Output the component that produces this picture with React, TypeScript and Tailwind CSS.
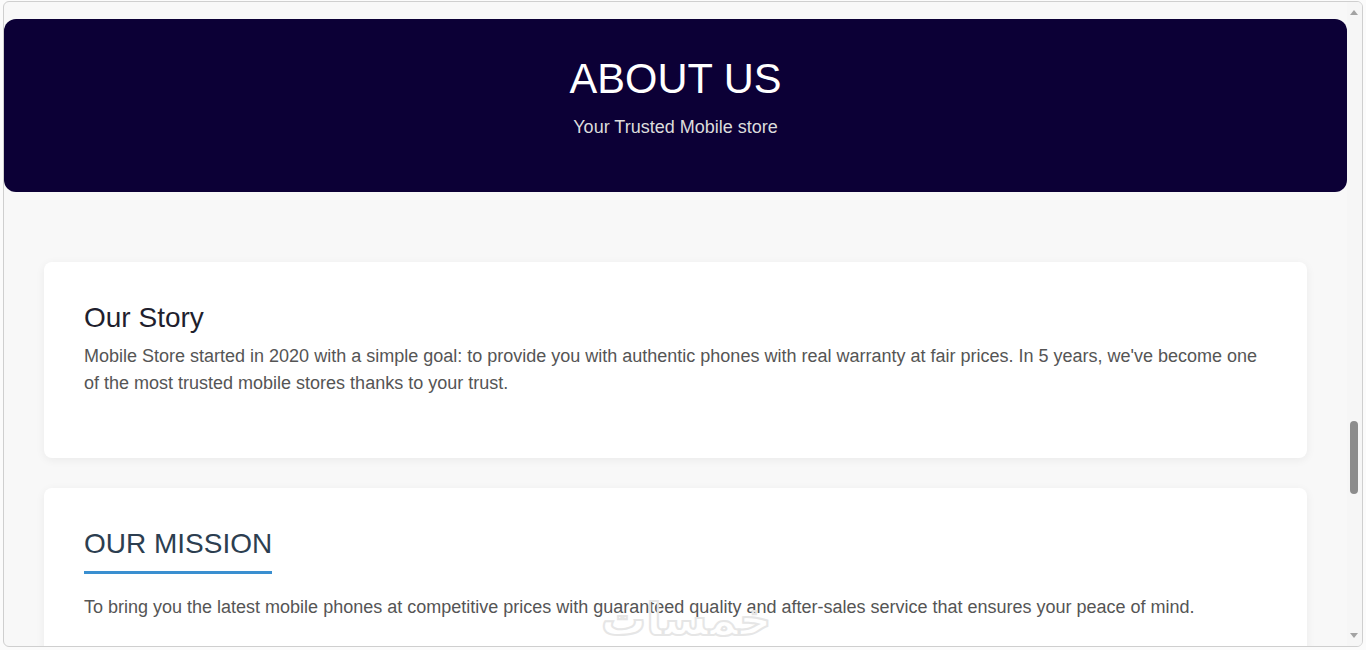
export default function App() {
  return (
    <div className="h-[650px] w-full bg-[#fbfbfb] pl-[3px] pt-[1px] overflow-hidden font-['Liberation_Sans',Arial,sans-serif]">
      {/* browser frame */}
      <div className="relative flex h-[646px] w-[1360px] overflow-hidden rounded-[6px] border border-[#cfcfcf] bg-[#f8f8f8]">
        {/* page content */}
        <div className="flex-1 pt-[17px]">
          <header className="rounded-[12px] bg-[#0c0036] pt-[36px] pb-[54px] text-center">
            <h1 className="mb-[14px] text-[41.6px] leading-[normal] font-normal text-white">ABOUT US</h1>
            <p className="text-[18px] leading-[normal] text-[#dcdcdc]">Your Trusted Mobile store</p>
          </header>

          <section className="mx-10 mt-[70px] rounded-lg bg-white px-10 pt-10 pb-[41px] shadow-[0_2px_10px_rgba(0,0,0,0.06)]">
            <h2 className="mb-[9px] text-[28px] leading-[normal] text-[#1f1f2e]">Our Story</h2>
            <p className="mb-5 text-[18px] leading-[27px] text-[#555]">
              Mobile Store started in 2020 with a simple goal: to provide you with authentic phones with real warranty at fair prices. In 5 years, we've become one of the most trusted mobile stores thanks to your trust.
            </p>
          </section>

          <section className="mx-10 mt-[30px] rounded-lg bg-white px-10 pt-10 pb-10 shadow-[0_2px_10px_rgba(0,0,0,0.06)]">
            <h2 className="mb-5 inline-block border-b-[3px] border-[#3a8fd0] pb-[11px] text-[28px] leading-[normal] text-[#2c3e50]">OUR MISSION</h2>
            <p className="text-[18px] leading-[27px] text-[#555]">
              To bring you the latest mobile phones at competitive prices with guaranteed quality and after-sales service that ensures your peace of mind.
            </p>
          </section>
        </div>

        {/* scrollbar */}
        <div className="relative w-[15px] bg-[#f6f6f6]">
          <div className="absolute left-[3px] top-[8px] h-0 w-0 border-x-[4px] border-b-[5px] border-x-transparent border-b-[#a3a3a3]" />
          <div className="absolute left-[3px] top-[419px] h-[73px] w-[8px] rounded-full bg-[#8c8c8c]" />
          <div className="absolute left-[3px] bottom-[8px] h-0 w-0 border-x-[4px] border-t-[5px] border-x-transparent border-t-[#a3a3a3]" />
        </div>

        {/* watermark */}
        <div
          dir="rtl"
          className="pointer-events-none absolute left-[597px] top-[595px] text-[45px] leading-none font-bold text-transparent [-webkit-text-stroke:2px_#e6e6e6] font-['DejaVu_Sans','Noto_Sans',sans-serif]"
        >
          خمسات
        </div>
      </div>
    </div>
  );
}
